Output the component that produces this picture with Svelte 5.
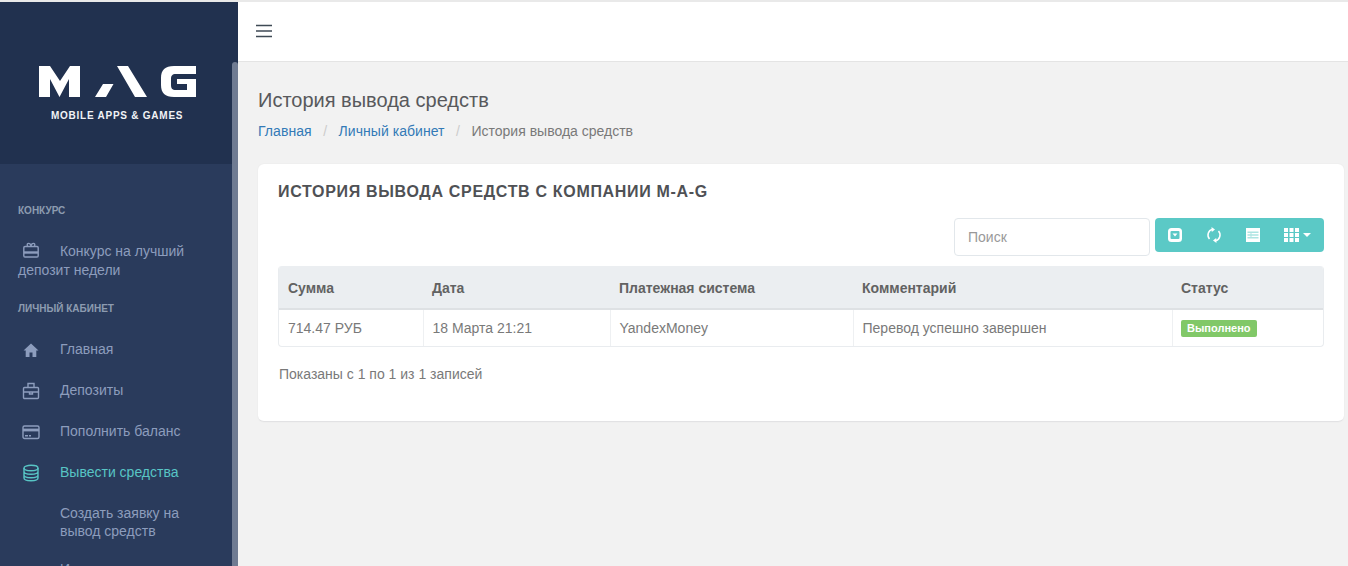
<script>
    let sections = [
        { title: "Конкурс", items: [{ icon: "gift", label: "Конкурс на лучший депозит недели", wrap: true }] },
        {
            title: "Личный кабинет",
            items: [
                { icon: "home", label: "Главная" },
                { icon: "case", label: "Депозиты" },
                { icon: "card", label: "Пополнить баланс" },
                { icon: "db", label: "Вывести средства", active: true }
            ]
        }
    ]
    let subitems = ["Создать заявку на вывод средств", "История вывода средств"]
    let columns = ["Сумма", "Дата", "Платежная система", "Комментарий", "Статус"]
    let row = ["714.47 РУБ", "18 Марта 21:21", "YandexMoney", "Перевод успешно завершен"]
</script>

<div class="page">
    <aside class="sidebar">
        <div class="brand">
            <svg class="logo" width="158" height="32" viewBox="0 0 158 32" fill="#fff">
                <path d="M0 0h11l10 15L31 0h10v31H30V13l-9.500 18L11 13v18H0z" />
                <path d="M56 31h11l7.500-13H64zM78 0h11l19 31H96z" />
                <path d="M157 0v8h-20c-4 0-5 2-5 5v6c0 3 1 5 5 5h11v-6h-10v-5h19v18h-22c-9 0-13-4-13-12v-7c0-8 4-12 13-12z" />
            </svg>
            <div class="tagline">MOBILE APPS &amp; GAMES</div>
        </div>
        <nav>
            {#each sections as section}
                <h4>{section.title}</h4>
                {#each section.items as item}
                    <a href="#top" class="item" class:active={item.active} class:wrap={item.wrap}>
                        <svg class="ico" width="18" height="18" viewBox="0 0 18 18" fill="none" stroke="currentColor" stroke-width="1.4">
                            {#if item.icon == "gift"}
                                <rect x="1.800" y="5.500" width="14.400" height="10.500" rx="1.200" />
                                <path d="M2 11.500h14" stroke-width="2.400" />
                                <path d="M5.500 5c-1.500-3.500 3-3.500 3.500 0 .5-3.500 5-3.500 3.500 0" />
                            {:else if item.icon == "home"}
                                <path fill="currentColor" stroke="none" d="M9 2.500 1.500 9.500h2.200V16h3.800v-4.500h3V16h3.800V9.500h2.200z" />
                            {:else if item.icon == "case"}
                                <rect x="1.500" y="5.500" width="15" height="11" rx="1" />
                                <path d="M6 5.500V1.500h6v4M1.500 10h15M7.500 10v2h3v-2" />
                            {:else if item.icon == "card"}
                                <rect x="1" y="3" width="16" height="12.500" rx="1.500" />
                                <path stroke-width="2.800" d="M1 7h16" />
                                <path d="M3 12.800h3M7 12.800h2" />
                            {:else}
                                <ellipse cx="9" cy="4" rx="7" ry="2.700" />
                                <path d="M2 4v10c0 1.500 3 2.700 7 2.700s7-1.200 7-2.700V4M2 7.500c0 1.500 3 2.700 7 2.700s7-1.200 7-2.700M2 11c0 1.500 3 2.700 7 2.700s7-1.200 7-2.700" />
                            {/if}
                        </svg>
                        {#if item.wrap}
                            {item.label}
                        {:else}
                            <span>{item.label}</span>
                        {/if}
                    </a>
                {/each}
            {/each}
            {#each subitems as sub}
                <a href="#top" class="sub">{sub}</a>
            {/each}
        </nav>
        <div class="scrollbar"></div>
    </aside>

    <div class="main">
        <header>
            <svg width="18" height="14" viewBox="0 0 18 14" stroke="#3f4a55" stroke-width="1.500">
                <path d="M1 1.500h16M1 7h16M1 12.500h16" />
            </svg>
        </header>

        <div class="content">
            <h1>История вывода средств</h1>
            <ol class="crumbs">
                <li><a href="#top">Главная</a></li>
                <li class="sep">/</li>
                <li><a href="#top">Личный кабинет</a></li>
                <li class="sep">/</li>
                <li>История вывода средств</li>
            </ol>

            <section class="card">
                <h2>История вывода средств с компании M-A-G</h2>
                <div class="toolbar">
                    <input type="text" placeholder="Поиск" />
                    <div class="buttons">
                        <button aria-label="Свернуть">
                            <svg width="16" height="16" viewBox="0 0 16 16">
                                <rect x="1" y="1" width="14" height="14" rx="3.500" fill="#fff" />
                                <rect x="3.500" y="4" width="9" height="8" rx="1" fill="#5bc9c6" />
                                <path d="M5.500 6.500h5L8 9.500z" fill="#fff" />
                            </svg>
                        </button>
                        <button aria-label="Обновить">
                            <svg width="16" height="16" viewBox="0 0 16 16" fill="none" stroke="#fff" stroke-width="1.500">
                                <path d="M3.500 12A6 6 0 0 1 6.500 2.200M12.500 4a6 6 0 0 1-3 9.800" />
                                <path fill="#fff" stroke="none" d="M5.500 0 9 2.500 5.800 5zM10.500 16 7 13.500l3.200-2.500z" />
                            </svg>
                        </button>
                        <button aria-label="Таблица">
                            <svg width="16" height="16" viewBox="0 0 16 16">
                                <rect x="1" y="1" width="14" height="14" fill="#fff" />
                                <path d="M2.500 4.500h11v1.500h-11zM2.500 7.300h11v1.500h-11zM2.500 10.100h11v1.500h-11zM5.500 4.500h1v7.100h-1z" fill="#5bc9c6" opacity="0.500" />
                            </svg>
                        </button>
                        <button class="columns" aria-label="Колонки">
                            <svg width="15" height="14" viewBox="0 0 15 14" fill="#fff">
                                <path d="M0 0h4v4H0zM5.500 0h4v4h-4zM11 0h4v4h-4zM0 5h4v4H0zM5.500 5h4v4h-4zM11 5h4v4h-4zM0 10h4v4H0zM5.500 10h4v4h-4zM11 10h4v4h-4z" />
                            </svg>
                            <i class="caret"></i>
                        </button>
                    </div>
                </div>

                <div class="table-wrap">
                    <table>
                        <thead>
                            <tr>
                                {#each columns as col}
                                    <th>{col}</th>
                                {/each}
                            </tr>
                        </thead>
                        <tbody>
                            <tr>
                                {#each row as cell}
                                    <td>{cell}</td>
                                {/each}
                                <td><span class="badge">Выполнено</span></td>
                            </tr>
                        </tbody>
                    </table>
                </div>

                <p class="info">Показаны с 1 по 1 из 1 записей</p>
            </section>
        </div>
    </div>
</div>

<style>
    :global(body) {
        margin: 0;
        overflow: hidden;
        font-family: "Liberation Sans", Arial, sans-serif;
    }

    .page {
        display: flex;
        height: 564px;
        border-top: 2px solid #e9e9e9;
        overflow: hidden;
        font-size: 14px;
        color: #797979;
    }

    a {
        text-decoration: none;
    }

    /* sidebar */
    .sidebar {
        position: relative;
        flex: 0 0 238px;
        background: #2a3b5c;
        overflow: hidden;
    }

    .brand {
        height: 162px;
        background: #21314f;
        padding-top: 64px;
        box-sizing: border-box;
    }

    .logo {
        display: block;
        margin-left: 39px;
    }

    .tagline {
        margin-top: 12px;
        margin-left: 51px;
        font-size: 10px;
        font-weight: bold;
        letter-spacing: 0.75px;
        line-height: 12px;
        color: #f1f3f6;
        white-space: nowrap;
    }

    nav {
        padding-top: 41px;
    }

    h4 {
        margin: 0;
        padding-left: 18px;
        font-size: 10px;
        line-height: 12px;
        text-transform: uppercase;
        color: #8d9bb0;
    }

    h4:not(:first-child) {
        margin-top: 24px;
        margin-bottom: 25px;
    }

    h4:first-child {
        margin-bottom: 24px;
    }

    .item {
        display: flex;
        align-items: center;
        height: 19px;
        margin-bottom: 22px;
        padding-left: 22px;
        color: #8d9dbd;
        line-height: 19px;
    }

    .item.wrap {
        display: block;
        width: 190px;
        height: 38px;
        margin-bottom: 0;
        padding-left: 18px;
        text-indent: 4px;
        box-sizing: content-box;
    }

    .item.wrap .ico {
        margin-right: 16px;
        vertical-align: -3px;
    }

    .item.active {
        color: #58c5c5;
    }

    .ico {
        flex: none;
        margin-right: 20px;
    }

    .sub {
        display: block;
        width: 140px;
        margin: 0 0 20px 60px;
        color: #8d9dbd;
        line-height: 18px;
    }

    .scrollbar {
        position: absolute;
        top: 60px;
        bottom: 0;
        right: 0;
        width: 6px;
        border-radius: 3px 3px 0 0;
        background: #6f7b92;
    }

    /* main */
    .main {
        flex: 1;
        min-width: 0;
        display: flex;
        flex-direction: column;
        background: #f2f2f2;
    }

    header {
        display: flex;
        align-items: center;
        flex: 0 0 60px;
        box-sizing: border-box;
        height: 61px;
        padding-left: 17px;
        padding-bottom: 1px;
        background: #fff;
        border-bottom: 1px solid #e4e4e4;
    }

    .content {
        padding: 26px 4px 0 20px;
    }

    h1 {
        margin: 0;
        font-size: 20px;
        font-weight: normal;
        line-height: 24px;
        color: #58595c;
    }

    .crumbs {
        display: flex;
        margin: 9px 0 0;
        padding: 0;
        list-style: none;
        line-height: 20px;
    }

    .crumbs a {
        color: #337ab7;
        letter-spacing: 0.05px;
    }

    .sep {
        margin: 0 11.5px;
        color: #ccc;
    }

    .card {
        margin-top: 23px;
        height: 258px;
        box-sizing: border-box;
        padding: 19px 20px 0;
        background: #fff;
        border-radius: 6px;
        border-bottom: 1px solid #e2e2e4;
        box-shadow: 0 0 2px rgba(0, 0, 0, 0.06);
    }

    h2 {
        margin: 0;
        font-size: 16px;
        line-height: 18px;
        text-transform: uppercase;
        letter-spacing: 0.68px;
        color: #4f5155;
    }

    .toolbar {
        display: flex;
        justify-content: flex-end;
        align-items: flex-start;
        gap: 5px;
        margin-top: 17px;
    }

    input {
        box-sizing: border-box;
        width: 196px;
        height: 38px;
        padding: 0 13px;
        border: 1px solid #e2e7eb;
        border-radius: 4px;
        font: inherit;
    }

    input::placeholder {
        color: #999;
    }

    .buttons {
        display: flex;
        box-sizing: border-box;
        width: 169px;
        height: 34px;
        background: #5bc9c6;
        border-radius: 4px;
    }

    button {
        display: flex;
        align-items: center;
        justify-content: center;
        width: 39px;
        padding: 0;
        border: 0;
        background: none;
    }

    .columns {
        width: 50px;
        gap: 4px;
    }

    .caret {
        border: 4px solid transparent;
        border-top-color: #fff;
        border-bottom: 0;
    }

    .table-wrap {
        margin-top: 10px;
        border: 1px solid #e9ecef;
        border-top: 0;
        border-radius: 4px;
        overflow: hidden;
    }

    table {
        width: 100%;
        border-collapse: collapse;
        table-layout: fixed;
    }

    th {
        height: 43px;
        box-sizing: border-box;
        padding: 2px 9px 0;
        text-align: left;
        color: #626262;
        background: #ebeef1;
        border-bottom: 2px solid #dee1e4;
    }

    th:nth-child(1) { width: 144px; }
    th:nth-child(2) { width: 187px; }
    th:nth-child(3) { width: 243px; }
    th:nth-child(4) { width: 319px; }

    td {
        height: 37px;
        box-sizing: border-box;
        padding: 0 8px 0 9px;
        border-left: 1px solid #eef0f2;
    }

    td:first-child {
        border-left: 0;
    }

    .badge {
        display: inline-block;
        margin-left: -1px;
        padding: 0 6.500px;
        font-size: 11px;
        font-weight: bold;
        line-height: 17px;
        color: #fff;
        background: #81c868;
        border-radius: 2px;
    }

    .info {
        margin: 17px 0 0 1px;
        line-height: 20px;
    }
</style>
